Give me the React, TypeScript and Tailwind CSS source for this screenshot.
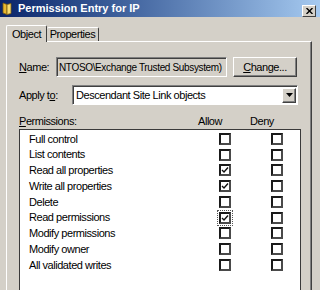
import React from 'react';

const perms = [
  { name: 'Full control', allow: false },
  { name: 'List contents', allow: false },
  { name: 'Read all properties', allow: true },
  { name: 'Write all properties', allow: true },
  { name: 'Delete', allow: false },
  { name: 'Read permissions', allow: true, focus: true },
  { name: 'Modify permissions', allow: false },
  { name: 'Modify owner', allow: false },
  { name: 'All validated writes', allow: false },
];

function FolderIcon() {
  return (
    <svg width="10" height="13" viewBox="0 0 10 13" className="shrink-0">
      <path d="M1 1 L5 2.5 L5 12.5 L1 11 Z" fill="#e8b830" stroke="#7a5a10" strokeWidth="0.8" />
      <path d="M5 2.5 L9 1.5 L9 11.5 L5 12.5 Z" fill="#f8dc70" stroke="#7a5a10" strokeWidth="0.8" />
    </svg>
  );
}

function Check({ on, focus }: { on: boolean; focus?: boolean }) {
  const box = (
    <div className="w-[12px] h-[12px] bg-white border-2 border-t-[#1a1a1a] border-l-[#1a1a1a] border-r-[#4a4a4a] border-b-[#4a4a4a] flex items-center justify-center">
      {on && (
        <svg width="8" height="8" viewBox="0 0 8 8">
          <path d="M1 4 L3 6 L7 1.5" fill="none" stroke="#111" strokeWidth="1.4" />
        </svg>
      )}
    </div>
  );
  if (focus) {
    return <div className="-m-[2px] p-[1px] border border-dotted border-[#555]">{box}</div>;
  }
  return box;
}

export default function App() {
  return (
    <div className="w-[320px] h-[290px] overflow-hidden bg-[#d4d0c8] text-[11px] tracking-[-0.45px] text-black font-['Liberation_Sans',Arial,sans-serif]">
      <div className="h-[17px] flex items-center pl-[2px] pr-[4px] bg-gradient-to-r from-[#0a246a] to-[#a6caf0]">
        <FolderIcon />
        <span className="ml-[6px] text-white font-bold text-[11px] tracking-normal leading-none">Permission Entry for IP</span>
        <div className="ml-auto mt-[4px] w-[14px] h-[12px] bg-[#d4d0c8] border border-t-white border-l-white border-r-[#404040] border-b-[#404040] flex items-center justify-center">
          <svg width="7" height="6" viewBox="0 0 7 6">
            <path d="M0.5 0 L6.5 6 M6.5 0 L0.5 6" stroke="#000" strokeWidth="1.4" />
          </svg>
        </div>
      </div>

      <div className="px-[6px] pt-[8px]">
        <div className="flex items-end h-[16px]">
          <div className="relative z-10 -mb-[1px] w-[41px] h-[17px] bg-[#d4d0c8] border-t border-l border-white border-r border-r-[#404040] rounded-t-[2px] flex items-center justify-center">
            Object
          </div>
          <div className="w-[52px] h-[14px] bg-[#d4d0c8] border-t border-white border-r border-r-[#404040] rounded-t-[2px] flex items-center justify-center">
            Properties
          </div>
        </div>

        <div className="w-[306px] h-[260px] border-t border-l border-white border-r border-r-[#404040] shadow-[inset_-1px_0_0_#808080] pl-[12px] pt-[15px]">
          <div className="flex items-center h-[20px]">
            <span className="w-[37px]"><span className="underline">N</span>ame:</span>
            <div className="w-[171px] h-[20px] bg-[#d4d0c8] border border-t-[#808080] border-l-[#808080] border-r-white border-b-white shadow-[inset_1px_1px_0_#404040] flex items-center pl-[2px]">
              <span className="whitespace-nowrap text-[10px] tracking-[-0.35px]">NTOSO\Exchange Trusted Subsystem)</span>
            </div>
            <div className="ml-[6px] w-[64px] h-[20px] border border-t-white border-l-white border-r-[#404040] border-b-[#404040] shadow-[inset_-1px_-1px_0_#808080] flex items-center justify-center">
              <span><span className="underline">C</span>hange...</span>
            </div>
          </div>

          <div className="flex items-center h-[20px] mt-[8px]">
            <span className="w-[53px]">Apply t<span className="underline">o</span>:</span>
            <div className="w-[226px] h-[20px] bg-white border border-t-[#808080] border-l-[#808080] border-r-white border-b-white shadow-[inset_1px_1px_0_#404040] flex items-center pl-[3px] pr-[1px]">
              <span className="flex-1 whitespace-nowrap">Descendant Site Link objects</span>
              <div className="w-[14px] h-[15px] bg-[#d4d0c8] border border-t-white border-l-white border-r-[#404040] border-b-[#404040] shadow-[inset_-1px_-1px_0_#808080] flex items-center justify-center">
                <svg width="7" height="4" viewBox="0 0 7 4">
                  <path d="M0 0 L7 0 L3.5 4 Z" fill="#000" />
                </svg>
              </div>
            </div>
          </div>

          <div className="flex items-center h-[14px] mt-[9px]">
            <span className="w-[179px]"><span className="underline">P</span>ermissions:</span>
            <span className="w-[52px]">Allow</span>
            <span>Deny</span>
          </div>

          <div className="mt-[1px] w-[282px] h-[170px] bg-white border border-[#3a3a3a] pt-[1px] pl-[9px]">
            {perms.map((p) => (
              <div key={p.name} className="flex items-center h-[15.75px]">
                <span className="w-[190px] whitespace-nowrap">{p.name}</span>
                <Check on={p.allow} focus={p.focus} />
                <div className="ml-[40px]">
                  <Check on={false} />
                </div>
              </div>
            ))}
          </div>
        </div>
      </div>
    </div>
  );
}
